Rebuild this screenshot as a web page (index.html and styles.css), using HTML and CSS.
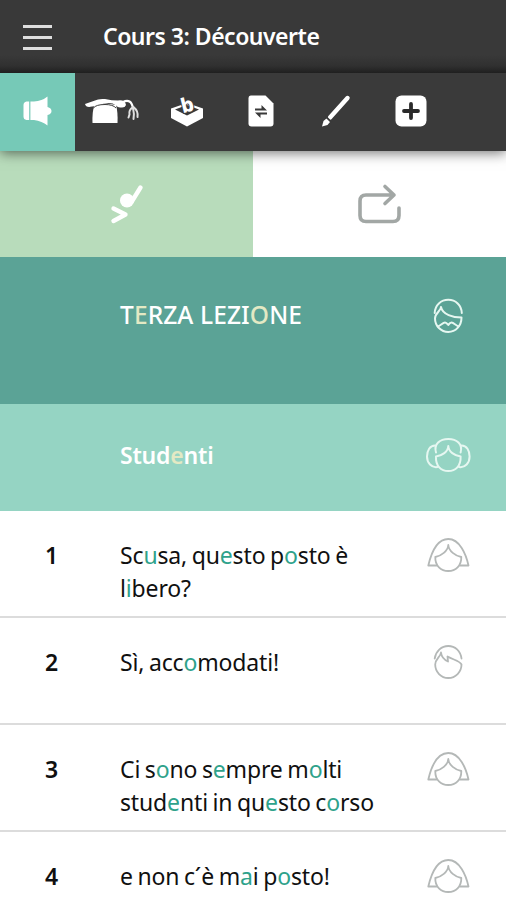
FILE: index.html
```html
<!DOCTYPE html>
<html lang="fr">
<head>
  <meta charset="UTF-8">
  <meta name="viewport" content="width=device-width, initial-scale=1">
  <title>Cours 3: Découverte</title>
  <link rel="stylesheet" href="styles.css">
</head>
<body>

  <!-- Icônes des personnages -->
  <svg class="hidden" xmlns="http://www.w3.org/2000/svg">
    <symbol id="femme" viewBox="0 0 48 40">
      <path d="M12.5 30.5H4.3C7 19 13 4 24.3 4S42 19 44.5 30.5H36" />
      <path d="M24.3 10C24 16 17 21 11.3 22C11 31 17 36 24.3 36S37.5 31 37.3 22C31.5 21 24.6 16 24.3 10Z" />
    </symbol>
    <symbol id="homme" viewBox="0 0 48 40">
      <path d="M10.7 16.5C12 9 17.5 4 24.3 4S36.5 9 37.5 16.5" />
      <path d="M17 10.5C16.5 15 11.2 17 11.2 22.5C11.2 30 17 36 24.3 36S37.5 30 37.5 22.5C35.5 18.5 29.5 18 23.5 14.5L24 19.5C20.5 18 17.5 15 17 10.5Z" />
    </symbol>
    <symbol id="barbu" viewBox="0 0 48 40">
      <path d="M10.7 17C11 9 17 3.8 24.3 3.8S37.5 9 37.8 17" />
      <path d="M17 11C17 15 11 17 11 22.5C11 30 17 36 24.3 36S37.5 30 37.5 21.5C29 21.5 18.5 18.5 17 11Z" />
      <path d="M14 30.5C16.5 29.5 19 26.5 21 26.5C22.5 26.5 23.5 28 24.3 29C25 28 26 26.5 27.5 26.5C29.5 26.5 32 29.5 34.5 30.5" />
    </symbol>
    <symbol id="groupe" viewBox="0 0 48 40">
      <path d="M12 17.5C9.5 9 16 4 24.3 4S39 9 36.6 17.5" />
      <path d="M11 10.5C6 10.5 3 15.5 3 21.5C3 28 7.5 33 13.5 32" />
      <path d="M37.6 10.5C42.6 10.5 45.6 15.5 45.6 21.5C45.6 28 41.2 33 35 32" />
      <path d="M24.3 11C24 17 18 20.5 12 21.5C11.5 31 17 36 24.3 36S37 31 36.6 21.5C30.6 20.5 24.6 17 24.3 11Z" />
    </symbol>
  </svg>

  <header class="entete">
    <button class="menu" aria-label="Menu"><span></span><span></span><span></span></button>
    <h1>Cours 3: Découverte</h1>
  </header>

  <nav class="outils">
    <a href="#dialogue" class="active" aria-label="Dialogue">
      <svg width="30" height="30" viewBox="0 0 30 30">
        <path fill="#fff" d="M4.5 5.5H7.2V24H4.5Q1.5 23.5 1.5 20.5V9Q1.5 6 4.5 5.5ZM8.4 5.5H12Q20 5 25.5 0.5V11Q29.5 12 29.5 15T25.5 19V29.5Q20 25 12 24H8.4Z" />
      </svg>
    </a>
    <a href="#telephone" aria-label="Téléphone">
      <svg width="56" height="30" viewBox="0 0 56 30">
        <path fill="#fff" d="M1 8Q6 6 11 4.5Q14 2.5 21 3Q28 4.5 34 4.5Q41 3.5 42 9Q41 12 37 11.5Q34 12 32 9.5Q28 6 20 7.5Q14 10 8 10.5Q2 12 1 8Z" />
        <path fill="#fff" d="M10.5 9Q20 6 32 9Q34 16 33.5 27H8.5Q8 16 10.5 9Z" />
        <path class="trait-fin" d="M9.5 12Q12 8.5 21 8.5Q29 8.5 32 12" />
        <path fill="none" stroke="#fff" stroke-width="2.2" stroke-linecap="round" d="M39 6Q47 2 49 12" />
        <path fill="none" stroke="#e0e0e0" stroke-width="2" stroke-linecap="round" d="M49 11Q44.5 14 45.5 18.5L44.5 21.5M49 12Q50.5 18 49.5 23M49.5 11Q54.5 15 53.5 21" />
      </svg>
    </a>
    <a href="#jeux" aria-label="Jeux">
      <svg width="36" height="40" viewBox="0 -3 36 40">
        <path fill="#fff" d="M2 14.5L18 9L34 14.5V24L18 32.5L2 24Z" />
        <path fill="#3a3a3a" d="M6 15.5L18 11L30 15.5L18 21.5Z" />
        <text x="12" y="18" class="lettre" transform="rotate(-14 18 12)">b</text>
      </svg>
    </a>
    <a href="#traduction" aria-label="Traduction">
      <svg width="28" height="32" viewBox="0 0 28 32">
        <path fill="#fff" d="M4 0.5H18.5L26.5 8.5V28.5Q26.5 31.5 23.5 31.5H4.5Q1.5 31.5 1.5 28.5V3.5Q1.5 0.5 4 0.5Z" />
        <path fill="#3a3a3a" d="M8 13.5H14.5V10L20 15.5H8ZM20 17.5H8L13.5 23V19.5H20Z" />
      </svg>
    </a>
    <a href="#ecriture" aria-label="Écriture">
      <svg width="32" height="34" viewBox="0 0 32 34">
        <path stroke="#fff" stroke-width="4.4" stroke-linecap="round" d="M27.5 4L10 23.5" />
        <path fill="#fff" d="M6.5 24.5L10 28L7.5 31L2 32.5L3.5 27Z" />
        <path stroke="#3a3a3a" stroke-width="1.5" d="M6 22.5L12 28.5" />
      </svg>
    </a>
    <a href="#plus" aria-label="Plus">
      <svg width="32" height="32" viewBox="0 0 32 32">
        <rect x="0.5" y="0.5" width="31" height="31" rx="6" fill="#fff" />
        <path stroke="#2a2a2a" stroke-width="3.8" stroke-linecap="round" d="M16 9V23M9 16H23" />
      </svg>
    </a>
  </nav>

  <div class="onglets">
    <button class="actif" aria-label="Écouter">
      <svg width="40" height="44" viewBox="0 0 40 44">
        <circle cx="20" cy="18.5" r="7" fill="#fff" />
        <path fill="none" stroke="#fff" stroke-width="4.4" stroke-linecap="round" stroke-linejoin="round" d="M33.5 5.5L24.5 20M6.5 26.5L18.5 32.5L6.5 39" />
      </svg>
    </button>
    <button aria-label="Répéter">
      <svg width="46" height="42" viewBox="0 0 46 42">
        <path fill="none" stroke="#a2a7a5" stroke-width="3.6" stroke-linecap="round" stroke-linejoin="round" d="M37 12H9Q3 12 3 18V32.5Q3 38.5 9 38.5H36Q42 38.5 42 32.5V25M28 3.5L37 12L28 20.5" />
      </svg>
    </button>
  </div>

  <main>
    <section class="ligne titre">
      <h2>T<i>E</i>RZA LEZI<i>O</i>NE</h2>
      <svg class="visage"><use href="#barbu" /></svg>
    </section>
    <section class="ligne sous-titre">
      <h3>Stud<i>e</i>nti</h3>
      <svg class="visage"><use href="#groupe" /></svg>
    </section>
    <div class="ligne">
      <b>1</b>
      <p>Sc<i>u</i>sa, qu<i>e</i>sto p<i>o</i>sto è l<i>i</i>bero?</p>
      <svg class="visage"><use href="#femme" /></svg>
    </div>
    <div class="ligne">
      <b>2</b>
      <p>Sì, acc<i>o</i>modati!</p>
      <svg class="visage"><use href="#homme" /></svg>
    </div>
    <div class="ligne">
      <b>3</b>
      <p>Ci s<i>o</i>no s<i>e</i>mpre m<i>o</i>lti stud<i>e</i>nti in qu<i>e</i>sto c<i>o</i>rso</p>
      <svg class="visage"><use href="#femme" /></svg>
    </div>
    <div class="ligne">
      <b>4</b>
      <p>e non c´è m<i>a</i>i p<i>o</i>sto!</p>
      <svg class="visage"><use href="#femme" /></svg>
    </div>
  </main>

</body>
</html>
```
FILE: styles.css
```css
* {
  margin: 0;
  padding: 0;
  box-sizing: border-box;
}

body {
  font-family: 'Noto Sans', 'Open Sans', sans-serif;
  font-size: 23px;
  line-height: 33px;
  background-color: white;
  color: #101010;
  height: 900px;
  overflow: hidden;
}

.hidden {
  display: none;
}

button {
  border: none;
  background: none;
  cursor: pointer;
}

svg {
  display: block;
}

/* En-tête */
.entete {
  display: flex;
  align-items: center;
  height: 73px;
  padding-left: 23px;
  background: linear-gradient(#393939 55px, #303030 66px, #1f1f1f 73px);
  color: white;
}

.entete h1 {
  margin-left: 51px;
  font-size: 23px;
  font-weight: 600;
  letter-spacing: -0.5px;
}

.menu {
  display: flex;
  flex-direction: column;
  gap: 8px;
  margin-top: 1px;
}

.menu span {
  width: 29px;
  height: 3px;
  background-color: #dedede;
}

/* Barre d'outils */
.outils {
  position: relative;
  display: flex;
  height: 78px;
  background-color: #3a3a3a;
  box-shadow: 0 2px 12px rgba(0, 0, 0, 0.55);
  clip-path: inset(0 0 -20px 0);
}

.outils a {
  display: flex;
  align-items: center;
  justify-content: center;
  width: 74.7px;
  padding-bottom: 2px;
}

.outils a.active {
  background-color: #76c9b7;
}

.trait-fin {
  fill: none;
  stroke: #3a3a3a;
  stroke-width: 1;
}

.lettre {
  font-size: 20px;
  font-weight: 800;
  fill: white;
  stroke: #3a3a3a;
  stroke-width: 2px;
  paint-order: stroke;
}

/* Onglets */
.onglets {
  display: flex;
  height: 106px;
}

.onglets button {
  display: flex;
  align-items: center;
  justify-content: center;
  flex: 1;
}

.onglets .actif {
  background-color: #b8dcbb;
}

/* Leçon */
.ligne {
  display: flex;
  align-items: flex-start;
  height: 107px;
  padding: 28px 34px 0 45px;
  border-bottom: 2px solid #dcdcdc;
}

.ligne b {
  width: 75px;
  font-weight: 600;
}

.ligne p {
  width: 280px;
  letter-spacing: -0.15px;
  word-spacing: -1.2px;
}

.ligne i {
  font-style: normal;
  color: #2fa28b;
}

.ligne .visage {
  width: 48px;
  height: 40px;
  margin: -4px 0 0 auto;
  fill: none;
  stroke: #b4b8b7;
  stroke-width: 1.8;
  stroke-linejoin: round;
  stroke-linecap: round;
}

.titre,
.sous-titre {
  padding-left: 120px;
  border-bottom: none;
  color: white;
}

.titre {
  height: 147px;
  padding-top: 41px;
  background-color: #5ba396;
}

.titre h2 {
  font-size: 24.5px;
  font-weight: 500;
  letter-spacing: 0.1px;
}

.sous-titre {
  padding-top: 35px;
  background-color: #95d4c3;
}

.sous-titre h3 {
  font-size: 23px;
  font-weight: 600;
  letter-spacing: -0.2px;
}

.titre i,
.sous-titre i {
  color: #e3e9c4;
}

.titre .visage,
.sous-titre .visage {
  stroke: #e6f7f1;
  stroke-width: 2;
}

.titre .visage {
  margin-top: -2px;
}
```
